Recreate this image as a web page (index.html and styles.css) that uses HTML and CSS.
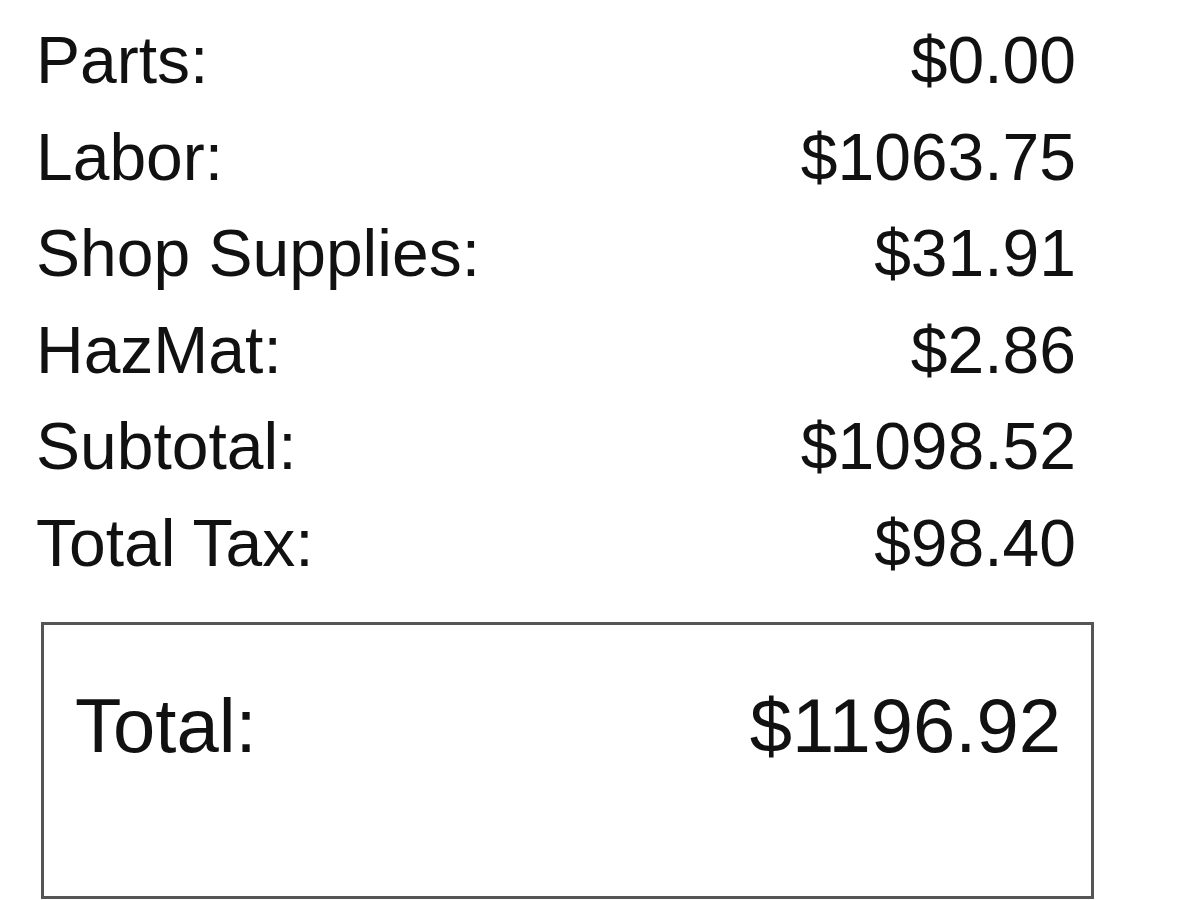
FILE: index.html
```html
<!DOCTYPE html>
<html>
<head>
<meta charset="utf-8">
<link rel="stylesheet" href="styles.css">
</head>
<body>
<div class="receipt">
  <div class="lines">
    <div class="row"><span>Parts:</span><span>$0.00</span></div>
    <div class="row"><span>Labor:</span><span>$1063.75</span></div>
    <div class="row"><span>Shop Supplies:</span><span>$31.91</span></div>
    <div class="row"><span>HazMat:</span><span>$2.86</span></div>
    <div class="row"><span>Subtotal:</span><span>$1098.52</span></div>
    <div class="row"><span>Total Tax:</span><span>$98.40</span></div>
  </div>
  <div class="total-box">
    <div class="total-row"><span>Total:</span><span>$1196.92</span></div>
  </div>
</div>
</body>
</html>
```
FILE: styles.css
```css
html, body {
  margin: 0;
  padding: 0;
  background: #ffffff;
}
body {
  width: 1200px;
  height: 900px;
  overflow: hidden;
  font-family: "Liberation Sans", Arial, Helvetica, sans-serif;
  color: #111111;
}
.receipt {
  padding-top: 12px;
}
.lines {
  margin-left: 36px;
  width: 1040px;
}
.row {
  display: flex;
  justify-content: space-between;
  font-size: 66px;
  line-height: 96.5px;
  white-space: nowrap;
}
.total-box {
  margin-top: 31px;
  margin-left: 41px;
  border: 3px solid #555555;
  padding: 63px 30px 132px 31px;
  box-sizing: content-box;
  width: 986px;
}
.total-row {
  display: flex;
  justify-content: space-between;
  font-size: 76px;
  line-height: 76px;
  white-space: nowrap;
}
```
